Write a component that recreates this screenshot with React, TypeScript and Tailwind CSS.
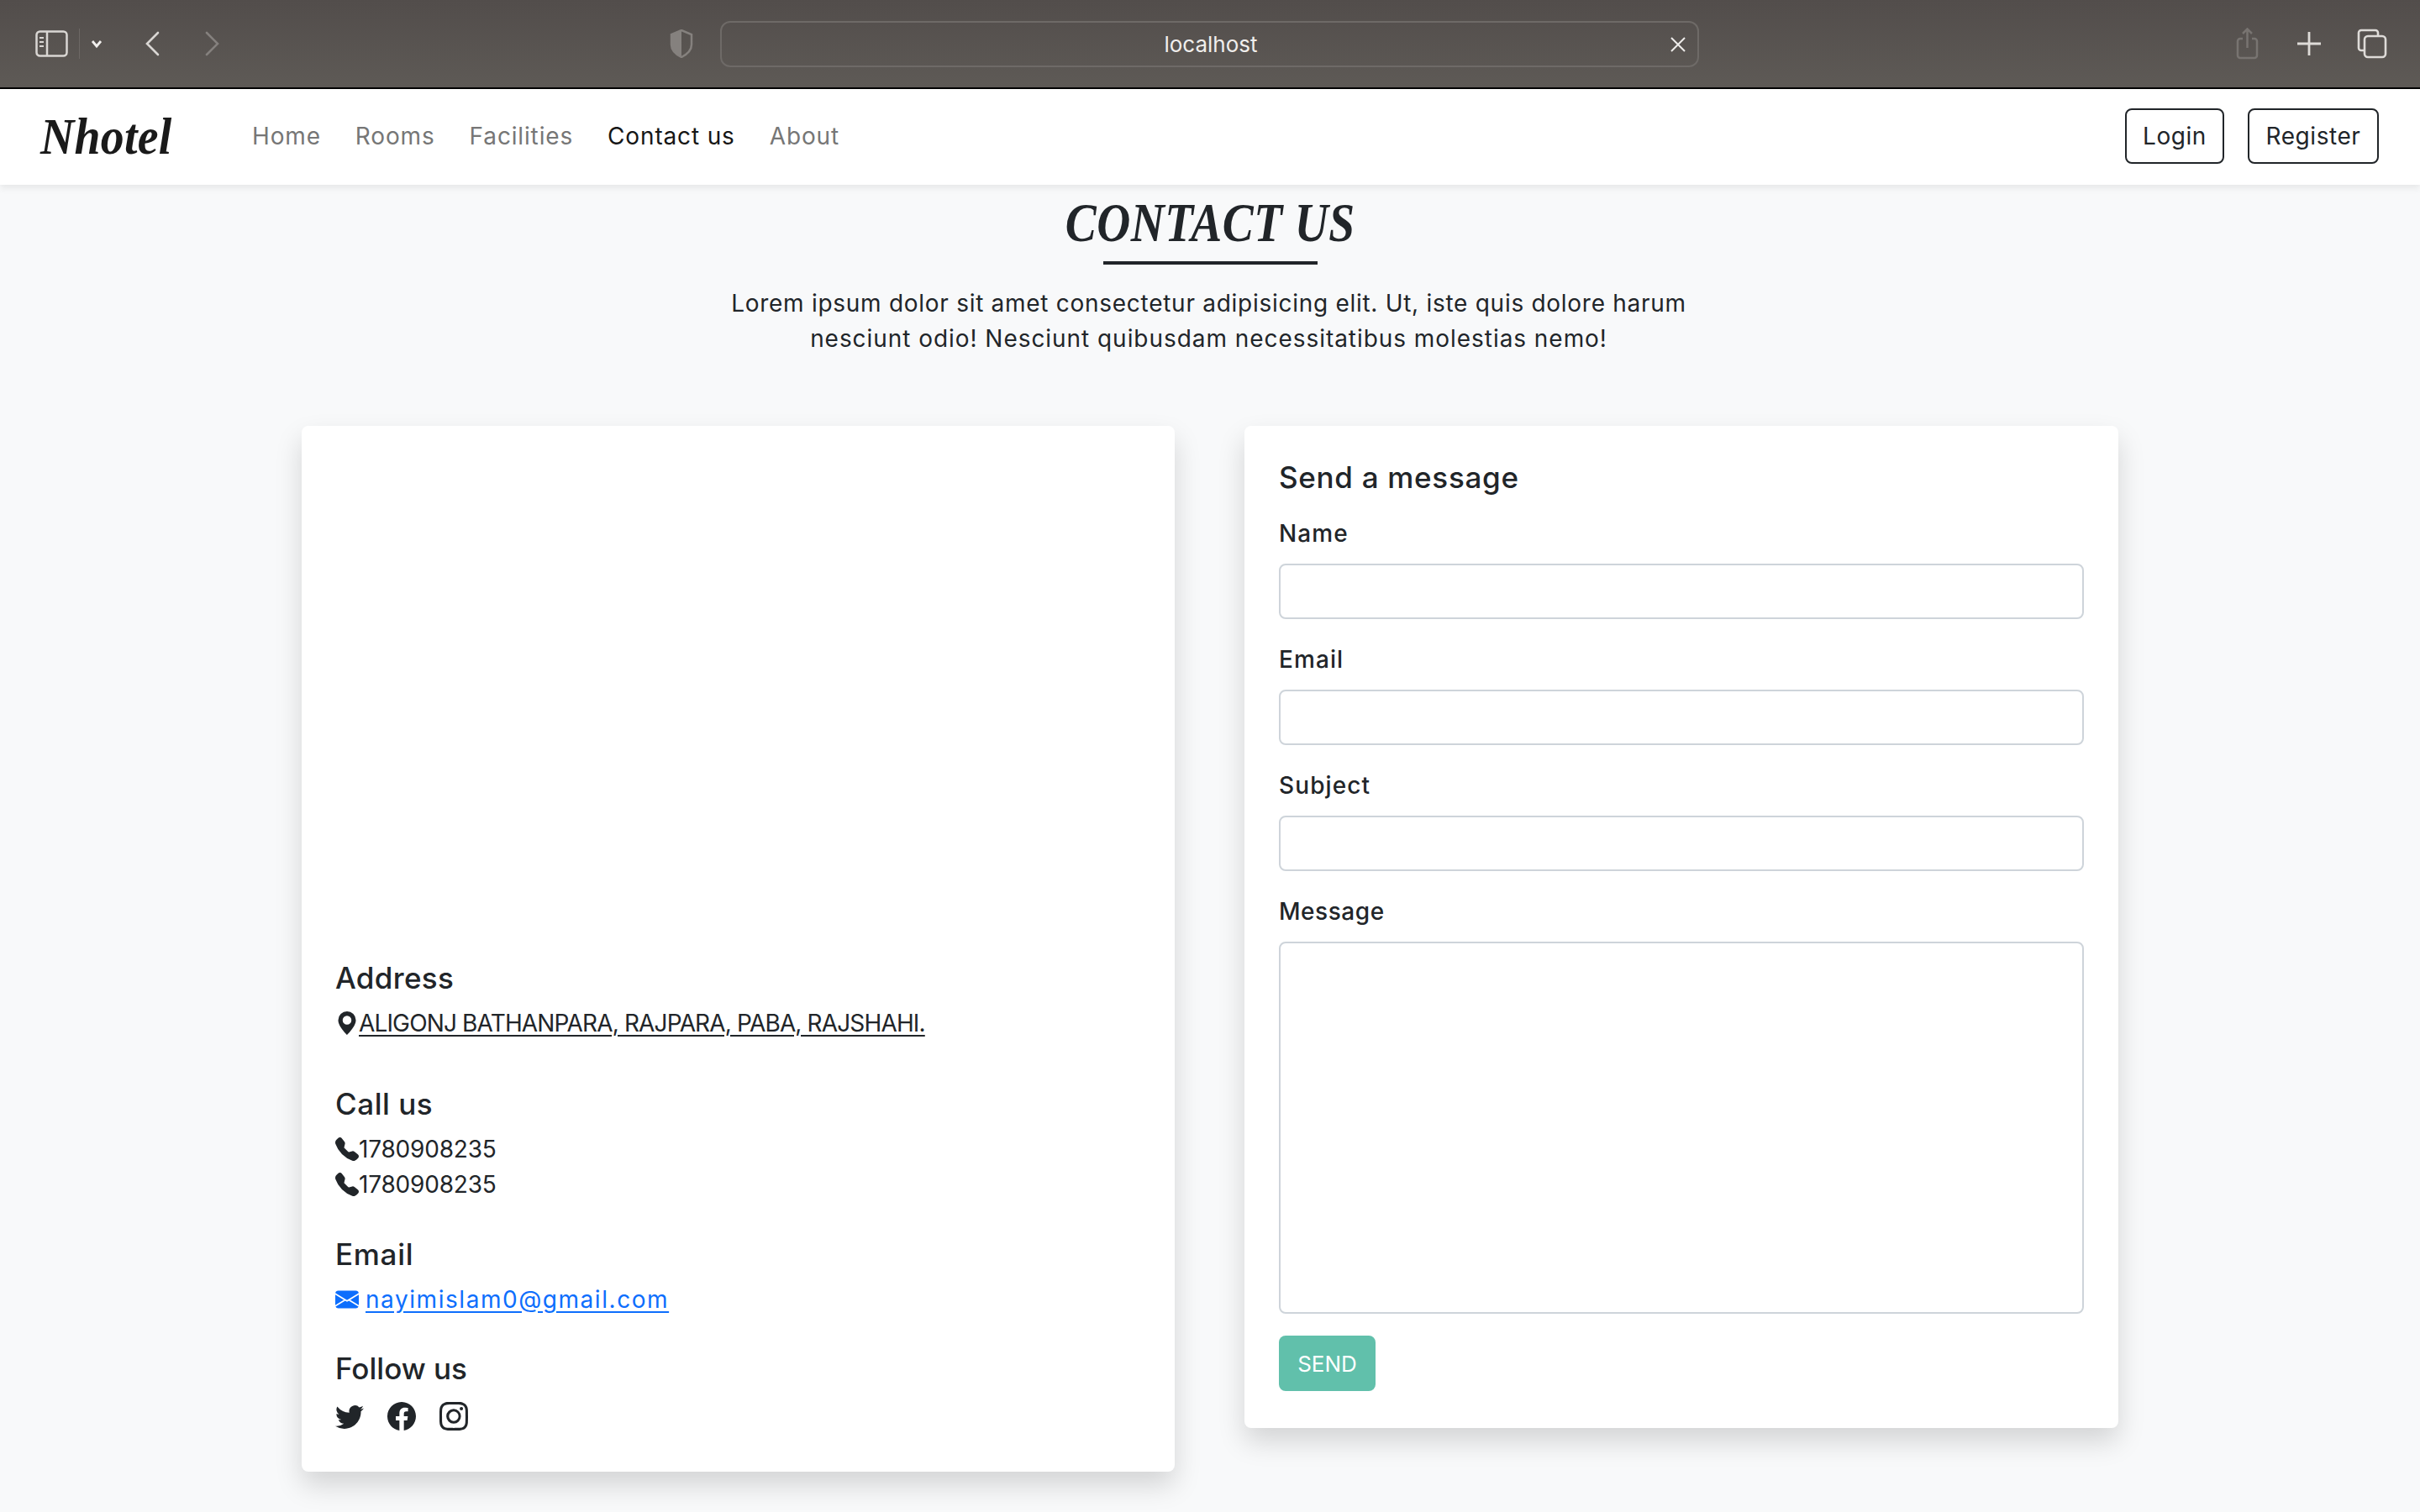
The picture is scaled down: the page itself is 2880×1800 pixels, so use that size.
import React from 'react';
import { BsGeoAltFill, BsTelephoneFill, BsEnvelopeFill, BsTwitter, BsFacebook, BsInstagram } from 'react-icons/bs';

const logoFont = "font-['Liberation_Serif',serif] font-bold italic";

function Toolbar() {
  return (
    <div className="flex h-[104px] items-center bg-gradient-to-b from-[#524d4b] to-[#5e5a56] pl-[42px]">
      <svg width="39" height="32" viewBox="0 0 39 32" fill="none" stroke="#d9d6d3" strokeWidth="2.5">
        <rect x="1.5" y="1.5" width="36" height="29" rx="4" />
        <path d="M14 2v28" />
        <path d="M5 9h5M5 14h5M5 19h5" strokeWidth="2" />
      </svg>
      <div className="ml-[13px] h-[36px] w-px bg-[#6d6865]" />
      <svg className="ml-[13px]" width="14" height="11" viewBox="0 0 14 11" fill="none" stroke="#f2f0ee" strokeWidth="2.8">
        <path d="M2 2l5 6 5-6" />
      </svg>
      <svg className="ml-[50px]" width="18" height="30" viewBox="0 0 18 30" fill="none" stroke="#d9d6d3" strokeWidth="2.6" strokeLinecap="round">
        <path d="M16 2L3 15l13 13" />
      </svg>
      <svg className="ml-[54px]" width="18" height="30" viewBox="0 0 18 30" fill="none" stroke="#85817e" strokeWidth="2.6" strokeLinecap="round">
        <path d="M2 2l13 13L2 28" />
      </svg>
      <svg className="ml-[535px]" width="28" height="34" viewBox="0 0 28 34">
        <path d="M14 1l12 5v12c0 7-6 12-12 15C8 30 2 25 2 18V6z" fill="none" stroke="#85817e" strokeWidth="2.5" />
        <path d="M14 1L2 6v12c0 7 6 12 12 15z" fill="#85817e" />
      </svg>
      <div className="relative ml-[32px] flex h-[55px] w-[1165px] items-center justify-center rounded-[12px] border-2 border-[#6e6a67] pl-[3px] font-['Inter',sans-serif] text-[26px] tracking-normal text-[#f0eeec]">
        localhost
        <svg className="absolute right-[14px] top-[17px]" width="18" height="18" viewBox="0 0 18 18" stroke="#eeecea" strokeWidth="2">
          <path d="M1 1l16 16M17 1L1 17" />
        </svg>
      </div>
      <svg className="ml-[639px]" width="27" height="38" viewBox="0 0 27 38" fill="none" stroke="#787471" strokeWidth="2.5">
        <path d="M8 13H5a3 3 0 0 0-3 3v17a3 3 0 0 0 3 3h17a3 3 0 0 0 3-3V16a3 3 0 0 0-3-3h-3" />
        <path d="M13.5 24V2M8 7l5.5-5.5L19 7" />
      </svg>
      <svg className="ml-[46px]" width="28" height="28" viewBox="0 0 28 28" stroke="#dedbd8" strokeWidth="2.8">
        <path d="M14 0v28M0 14h28" />
      </svg>
      <svg className="ml-[43px]" width="36" height="36" viewBox="0 0 36 36" fill="none" stroke="#dedbd8" strokeWidth="2.6">
        <path d="M8 26H5a3 3 0 0 1-3-3V5a3 3 0 0 1 3-3h17a3 3 0 0 1 3 3v3" />
        <rect x="9" y="9" width="25" height="25" rx="4" />
      </svg>
    </div>
  );
}

function Navbar() {
  return (
    <nav className="relative flex h-[116px] items-center border-t-2 border-[#000] bg-white pb-[2px] pl-[48px] pr-[49px] shadow-[0_4px_8px_rgba(0,0,0,0.075)]">
      <span className={`${logoFont} w-[252px] origin-left scale-x-[0.9] text-[62px] leading-none tracking-[0.3px] text-[#1a1a1a]`}>Nhotel</span>
      <div className="flex flex-1 items-center gap-[41px] text-[28px] tracking-[0.85px] text-[#767676]">
        <a>Home</a>
        <a>Rooms</a>
        <a>Facilities</a>
        <a className="text-[#161616]">Contact us</a>
        <a>About</a>
      </div>
      <button className="h-[66px] w-[118px] rounded-[8px] border-2 border-[#212529] text-[28px] text-[#212529]">Login</button>
      <button className="ml-[28px] h-[66px] w-[156px] rounded-[8px] border-2 border-[#212529] text-[28px] text-[#212529]">Register</button>
    </nav>
  );
}

function Field({ label }: { label: string }) {
  return (
    <div className="mb-[28px]">
      <label className="mb-[16px] block text-[28px] font-medium leading-[40px] tracking-[1.1px]">{label}</label>
      <input className="block h-[66px] w-full rounded-[8px] border-2 border-[#ced4da] bg-white" />
    </div>
  );
}

export default function App() {
  return (
    <div className="min-h-screen bg-[#f8f9fa] font-['Inter',sans-serif] tracking-[0.55px] text-[#212529]">
      <Toolbar />
      <Navbar />

      <div className="flex flex-col items-center pt-[7px]">
        <h2 className={`${logoFont} scale-x-[0.84] text-[66px] leading-[76px] tracking-[0.5px]`}>CONTACT US</h2>
        <div className="mt-[8px] h-[4px] w-[255px] bg-[#212529]" />
        <p className="mt-[25px] w-[1200px] pr-[3px] text-center text-[28px] leading-[42px] tracking-[0.72px]">
          Lorem ipsum dolor sit amet consectetur adipisicing elit. Ut, iste quis dolore harum
          <br />
          <span className="tracking-[0.95px]">nesciunt odio! Nesciunt quibusdam necessitatibus molestias nemo!</span>
        </p>
      </div>

      <div className="mt-[83px] flex items-start justify-center gap-[83px] pb-[48px]">
        {/* Map + contact details */}
        <div className="w-[1039px] rounded-[8px] bg-white px-[40px] pb-[49px] pt-[40px] shadow-[0_16px_32px_rgba(0,0,0,0.15)]">
          <div className="h-[595px]" />
          <h5 className="text-[35px] font-medium leading-[44px] tracking-[0.3px]">Address</h5>
          <a className="mt-[11px] flex h-[42px] items-center text-[28px] tracking-[-0.85px] underline underline-offset-[4px]">
            <BsGeoAltFill className="h-[28px] w-[28px] shrink-0" />
            ALIGONJ BATHANPARA, RAJPARA, PABA, RAJSHAHI.
          </a>

          <h5 className="mt-[53px] text-[35px] font-medium leading-[44px]">Call us</h5>
          <div className="mt-[11px] flex h-[42px] items-center text-[28px] tracking-[-0.2px]">
            <BsTelephoneFill className="h-[28px] w-[28px] shrink-0" />
            1780908235
          </div>
          <div className="flex h-[42px] items-center text-[28px] tracking-[-0.2px]">
            <BsTelephoneFill className="h-[28px] w-[28px] shrink-0" />
            1780908235
          </div>

          <h5 className="mt-[40px] text-[35px] font-medium leading-[44px] tracking-[0.7px]">Email</h5>
          <a className="mt-[11px] flex h-[42px] items-center text-[28px] tracking-[1.55px] text-[#0d6efd] underline underline-offset-[4px]">
            <BsEnvelopeFill className="h-[28px] w-[28px] shrink-0" />
            <span className="ml-[8px]">nayimislam0@gmail.com</span>
          </a>

          <h5 className="mt-[39px] text-[35px] font-medium leading-[44px] tracking-[0px]">Follow us</h5>
          <div className="mt-[18px] flex items-center gap-[28px]">
            <BsTwitter className="h-[34px] w-[34px]" />
            <BsFacebook className="h-[34px] w-[34px]" />
            <BsInstagram className="h-[34px] w-[34px]" />
          </div>
        </div>

        {/* Message form */}
        <div className="w-[1040px] rounded-[8px] bg-white px-[41px] pb-[44px] pt-[39px] shadow-[0_16px_32px_rgba(0,0,0,0.15)]">
          <h5 className="mb-[25px] text-[35px] font-medium leading-[44px] tracking-[0.7px]">Send a message</h5>
          <Field label="Name" />
          <Field label="Email" />
          <Field label="Subject" />
          <label className="mb-[16px] block text-[28px] font-medium leading-[40px]">Message</label>
          <textarea className="block h-[443px] w-full resize-none rounded-[8px] border-2 border-[#ced4da] bg-white" />
          <button className="mt-[26px] h-[66px] w-[115px] rounded-[8px] bg-[#61c0ab] text-[26px] tracking-normal text-white">SEND</button>
        </div>
      </div>
    </div>
  );
}
